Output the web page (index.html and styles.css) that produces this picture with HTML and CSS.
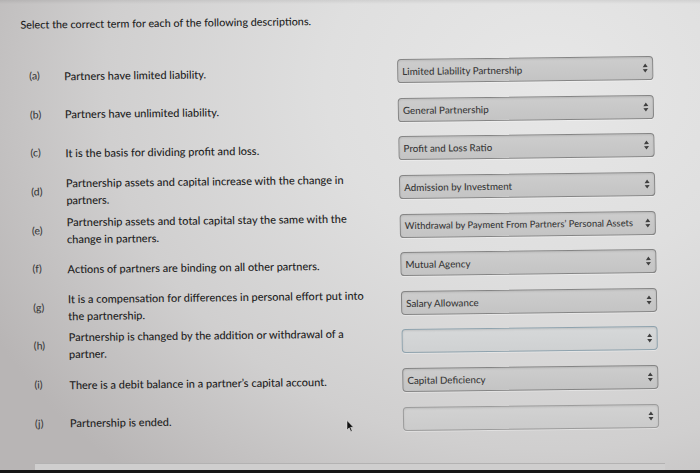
FILE: index.html
```html
<!DOCTYPE html>
<html lang="en">
<head>
  <meta charset="UTF-8">
  <title>Partnership terms</title>
  <link rel="stylesheet" href="styles.css">
</head>
<body>

<main class="sheet">
  <p class="prompt">Select the correct term for each of the following descriptions.</p>

  <ol class="terms">
    <li class="term">
      <span class="term-label">(a)</span>
      <span class="term-text">Partners have limited liability.</span>
      <div class="picker" role="combobox">
        <span class="picker-value">Limited Liability Partnership</span>
        <svg class="picker-arrow" viewBox="0 0 6 10" aria-hidden="true"><path d="M3 0.5 L5.5 4 L0.5 4 Z M3 9.5 L5.5 6 L0.5 6 Z"/></svg>
      </div>
    </li>
    <li class="term">
      <span class="term-label">(b)</span>
      <span class="term-text">Partners have unlimited liability.</span>
      <div class="picker" role="combobox">
        <span class="picker-value">General Partnership</span>
        <svg class="picker-arrow" viewBox="0 0 6 10" aria-hidden="true"><path d="M3 0.5 L5.5 4 L0.5 4 Z M3 9.5 L5.5 6 L0.5 6 Z"/></svg>
      </div>
    </li>
    <li class="term">
      <span class="term-label">(c)</span>
      <span class="term-text">It is the basis for dividing profit and loss.</span>
      <div class="picker" role="combobox">
        <span class="picker-value">Profit and Loss Ratio</span>
        <svg class="picker-arrow" viewBox="0 0 6 10" aria-hidden="true"><path d="M3 0.5 L5.5 4 L0.5 4 Z M3 9.5 L5.5 6 L0.5 6 Z"/></svg>
      </div>
    </li>
    <li class="term">
      <span class="term-label">(d)</span>
      <span class="term-text">Partnership assets and capital increase with the change in partners.</span>
      <div class="picker" role="combobox">
        <span class="picker-value">Admission by Investment</span>
        <svg class="picker-arrow" viewBox="0 0 6 10" aria-hidden="true"><path d="M3 0.5 L5.5 4 L0.5 4 Z M3 9.5 L5.5 6 L0.5 6 Z"/></svg>
      </div>
    </li>
    <li class="term">
      <span class="term-label">(e)</span>
      <span class="term-text">Partnership assets and total capital stay the same with the change in partners.</span>
      <div class="picker" role="combobox">
        <span class="picker-value picker-value-long">Withdrawal by Payment From Partners’ Personal Assets</span>
        <svg class="picker-arrow" viewBox="0 0 6 10" aria-hidden="true"><path d="M3 0.5 L5.5 4 L0.5 4 Z M3 9.5 L5.5 6 L0.5 6 Z"/></svg>
      </div>
    </li>
    <li class="term">
      <span class="term-label">(f)</span>
      <span class="term-text">Actions of partners are binding on all other partners.</span>
      <div class="picker" role="combobox">
        <span class="picker-value">Mutual Agency</span>
        <svg class="picker-arrow" viewBox="0 0 6 10" aria-hidden="true"><path d="M3 0.5 L5.5 4 L0.5 4 Z M3 9.5 L5.5 6 L0.5 6 Z"/></svg>
      </div>
    </li>
    <li class="term">
      <span class="term-label">(g)</span>
      <span class="term-text">It is a compensation for differences in personal effort put into the partnership.</span>
      <div class="picker" role="combobox">
        <span class="picker-value">Salary Allowance</span>
        <svg class="picker-arrow" viewBox="0 0 6 10" aria-hidden="true"><path d="M3 0.5 L5.5 4 L0.5 4 Z M3 9.5 L5.5 6 L0.5 6 Z"/></svg>
      </div>
    </li>
    <li class="term">
      <span class="term-label">(h)</span>
      <span class="term-text">Partnership is changed by the addition or withdrawal of a partner.</span>
      <div class="picker picker-blank picker-active" role="combobox">
        <span class="picker-value"></span>
        <svg class="picker-arrow" viewBox="0 0 6 10" aria-hidden="true"><path d="M3 0.5 L5.5 4 L0.5 4 Z M3 9.5 L5.5 6 L0.5 6 Z"/></svg>
      </div>
    </li>
    <li class="term">
      <span class="term-label">(i)</span>
      <span class="term-text">There is a debit balance in a partner’s capital account.</span>
      <div class="picker" role="combobox">
        <span class="picker-value">Capital Deficiency</span>
        <svg class="picker-arrow" viewBox="0 0 6 10" aria-hidden="true"><path d="M3 0.5 L5.5 4 L0.5 4 Z M3 9.5 L5.5 6 L0.5 6 Z"/></svg>
      </div>
    </li>
    <li class="term">
      <span class="term-label">(j)</span>
      <span class="term-text">Partnership is ended.</span>
      <div class="picker picker-blank" role="combobox">
        <span class="picker-value"></span>
        <svg class="picker-arrow" viewBox="0 0 6 10" aria-hidden="true"><path d="M3 0.5 L5.5 4 L0.5 4 Z M3 9.5 L5.5 6 L0.5 6 Z"/></svg>
      </div>
    </li>
  </ol>
</main>

<div class="panel-edge"></div>
<div class="bezel"></div>

<svg class="cursor" viewBox="0 0 8 12" aria-hidden="true"><path d="M1 0.5 L1 10 L3.2 7.8 L4.8 11.5 L6.2 10.9 L4.6 7.3 L7.5 7.3 Z"/></svg>

</body>
</html>
```

FILE: styles.css
```css
* {
  box-sizing: border-box;
}

html, body {
  height: 100%;
}

body {
  margin: 0;
  height: 473px;
  overflow: hidden;
  display: flex;
  flex-direction: column;
  font-family: Lato, "Open Sans", sans-serif;
  color: #222;
  background:
    linear-gradient(to bottom, rgba(0, 0, 0, 0.07) 0, transparent 4px),
    radial-gradient(ellipse 90% 110% at 78% 18%, #e7e7e7 0%, #dfdfdf 35%, #d0cfcf 70%, #b8b5b5 100%);
  position: relative;
}

.sheet {
  flex: 1;
  padding: 18px 0 0 20px;
  transform: rotate(-0.7deg) skewX(0.25deg);
  transform-origin: 0 0;
}

.prompt {
  margin: 0;
  font-size: 10.8px;
  font-weight: 500;
  line-height: 14px;
  color: #1e1e1e;
}

.terms {
  list-style: none;
  margin: 25px 0 0;
  padding: 0 0 0 8px;
  display: grid;
  grid-auto-rows: 38.6px;
}

.term {
  display: grid;
  grid-template-columns: 35px 333px 256px;
  align-items: center;
}

.term-label {
  font-size: 10.5px;
  font-weight: 500;
  color: #3a3a3a;
}

.term-text {
  font-size: 11px;
  font-weight: 500;
  line-height: 17px;
  max-width: 305px;
  color: #222;
}

.picker {
  display: flex;
  align-items: center;
  justify-content: space-between;
  height: 24px;
  padding: 0 4px 0 4px;
  border: 1px solid #858585;
  border-radius: 4px;
  background: linear-gradient(#cdcdcd, #c4c4c4);
  box-shadow: inset 0 1px 2px rgba(0, 0, 0, 0.1), 0 1px 0 rgba(255, 255, 255, 0.35);
}

.picker-blank {
  background: linear-gradient(#d2d2d2, #cbcbcb);
  border-color: #9c9c9c;
}

.picker-active {
  background: linear-gradient(#d6d8d9, #cfd1d2);
  border-color: #8fa3ae;
}

.picker-value {
  font-size: 9.8px;
  font-weight: 500;
  color: #383838;
  white-space: nowrap;
}

.picker-value-long {
  font-size: 9.4px;
}

.picker-arrow {
  flex: none;
  width: 6px;
  height: 10px;
  margin-left: 3px;
  fill: #404040;
}

.panel-edge {
  height: 7px;
  margin: 0 35px;
  background: #cfcece;
  border-top: 1px solid #b3b2b2;
}

.bezel {
  height: 3px;
  background: #161616;
}

.cursor {
  position: absolute;
  left: 346px;
  top: 420px;
  width: 8px;
  height: 12px;
  fill: #111;
  stroke: #eee;
  stroke-width: 0.5;
}
```
